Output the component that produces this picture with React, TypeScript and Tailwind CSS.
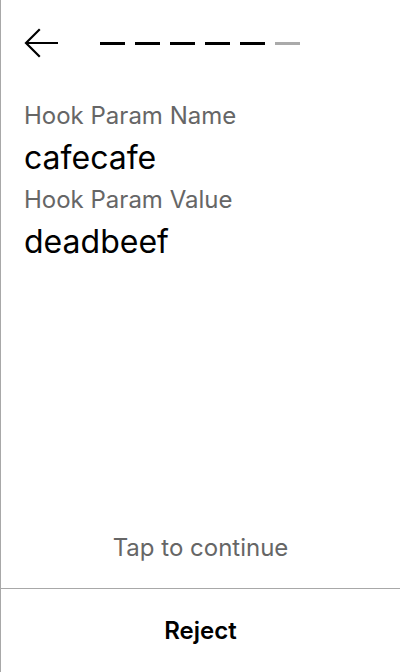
import React from "react";

const steps = [true, true, true, true, true, false];

export default function App() {
  return (
    <div
      className="w-[400px] h-[672px] flex flex-col bg-white border-l border-[#a8a8a8] text-black"
      style={{ fontFamily: "Inter, 'Noto Sans', sans-serif" }}
    >
      {/* ヘッダー: 戻る + 進捗 */}
      <div className="h-[86px] flex items-center pl-[23px]">
        <button className="w-[36px] h-[30px] flex items-center">
          <svg width="34" height="30" viewBox="0 0 34 30" fill="none">
            <path
              d="M33 15H2.5M15 2L2 15L15 28"
              stroke="#000"
              strokeWidth="2.2"
              strokeLinecap="square"
            />
          </svg>
        </button>
        <div className="ml-[40px] flex gap-[10px]">
          {steps.map((done, i) => (
            <div
              key={i}
              className={`w-[25px] h-[3px] ${done ? "bg-black" : "bg-[#aaaaaa]"}`}
            />
          ))}
        </div>
      </div>

      {/* パラメータ */}
      <div className="pl-[23px] pr-6 pt-3 flex flex-col">
        <div className="h-[36px] flex items-center text-[24px] text-[#666666]">
          Hook Param Name
        </div>
        <div className="h-[48px] flex items-center text-[32px]">cafecafe</div>
        <div className="h-[36px] flex items-center text-[24px] text-[#666666]">
          Hook Param Value
        </div>
        <div className="h-[48px] flex items-center text-[32px]">deadbeef</div>
      </div>

      <div className="flex-1" />

      <div className="h-[40px] mb-[20px] flex items-center justify-center text-[24px] text-[#666666]">
        Tap to continue
      </div>

      <button className="h-[84px] border-t border-[#a8a8a8] flex items-center justify-center text-[24px] font-semibold">
        Reject
      </button>
    </div>
  );
}
